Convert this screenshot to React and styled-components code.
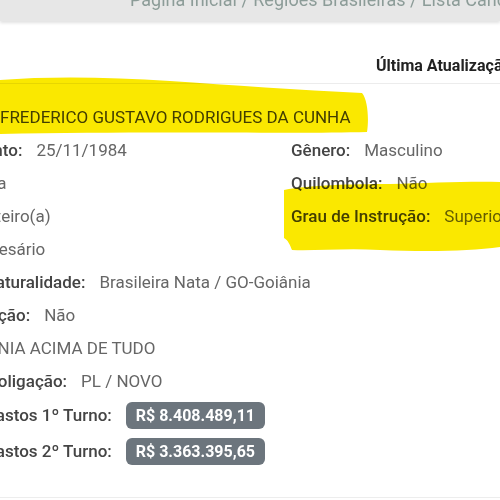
import React from 'react';
import styled, { createGlobalStyle } from 'styled-components';

const GlobalStyle = createGlobalStyle`
  body {
    margin: 0;
    background: #fff;
    font-family: Roboto, "Liberation Sans", sans-serif;
    overflow: hidden;
  }
`;

const Page = styled.div`
  position: relative;
  width: 500px;
  height: 500px;
  overflow: hidden;
  background: #fff;
`;

const TopBar = styled.div`
  height: 21px;
  background: #e7e7e7;
  box-shadow: 0 2px 3px rgba(0, 0, 0, 0.12);
  padding-left: 130px;
  overflow: hidden;
  position: relative;
  z-index: 1;
`;

const Crumb = styled.div`
  margin-top: -9px;
  font-size: 18px;
  line-height: 18px;
  color: #8c9c98;
  white-space: nowrap;
`;

const Sheet = styled.div`
  margin-left: -136px;
  width: 900px;
`;

const CardHeader = styled.div`
  padding: 35px 0 7px 512px;
  line-height: 20px;
  font-size: 16px;
  font-weight: 700;
  color: #222;
  white-space: nowrap;
  border-bottom: 1px solid #ececec;
`;

const CardBody = styled.div`
  padding: 16px 0 28px;
  border-bottom: 1px solid #ededed;
`;

const TwoCol = styled.div`
  display: grid;
  grid-template-columns: 427px 1fr;
`;

const Stack = styled.div`
  display: flex;
  flex-direction: column;
`;

const Row = styled.div`
  display: flex;
  align-items: center;
  gap: ${(p) => (p.$tight ? '8px' : '14px')};
  height: ${(p) => (p.$tall ? '36px' : '33px')};
  font-size: 17px;
  white-space: nowrap;
`;

const Label = styled.span`
  font-weight: 500;
  color: #444;
`;

const Value = styled.span`
  color: #666;
  ${(p) => p.$name && 'color: #444; text-transform: uppercase;'}
`;

const Badge = styled.span`
  display: inline-block;
  background: #6c757d;
  color: #fff;
  font-size: 16px;
  font-weight: 700;
  line-height: 19px;
  padding: 4px 10px;
  border-radius: 6px;
`;

const Marker = styled.svg`
  position: absolute;
  left: 0;
  top: 0;
  pointer-events: none;
  mix-blend-mode: multiply;
`;

const Field = ({ label, children, tall, tight }) => (
  <Row $tall={tall} $tight={tight}>
    <Label>{label}</Label>
    {children}
  </Row>
);

export default function App() {
  return (
    <Page>
      <GlobalStyle />
      <TopBar>
        <Crumb>Página Inicial / Regiões Brasileiras / Lista Candidatos</Crumb>
      </TopBar>
      <Sheet>
        <CardHeader>Última Atualização: 15/08/2024</CardHeader>
        <CardBody>
          <Field label="Nome Completo:" tight>
            <Value $name>Frederico Gustavo Rodrigues da Cunha</Value>
          </Field>
          <TwoCol>
            <Stack>
              <Field label="Data de Nascimento:"><Value>25/11/1984</Value></Field>
              <Field label="Cor/Raça:"><Value>Branca</Value></Field>
              <Field label="Estado Civil:"><Value>Solteiro(a)</Value></Field>
            </Stack>
            <Stack>
              <Field label="Gênero:"><Value>Masculino</Value></Field>
              <Field label="Quilombola:"><Value>Não</Value></Field>
              <Field label="Grau de Instrução:"><Value>Superior completo</Value></Field>
            </Stack>
          </TwoCol>
          <Field label="Ocupação:"><Value>Empresário</Value></Field>
          <Field label="Nacionalidade/ Naturalidade:">
            <Value>Brasileira Nata / GO-Goiânia</Value>
          </Field>
          <Field label="Concorre à Reeleição:"><Value>Não</Value></Field>
          <Field label="Coligação:"><Value>GOIÂNIA ACIMA DE TUDO</Value></Field>
          <Field label="Composição da Coligação:"><Value>PL / NOVO</Value></Field>
          <Field label="Limite Legal de Gastos 1º Turno:" tall>
            <Badge>R$ 8.408.489,11</Badge>
          </Field>
          <Field label="Limite Legal de Gastos 2º Turno:" tall>
            <Badge>R$ 3.363.395,65</Badge>
          </Field>
        </CardBody>
      </Sheet>
      <Marker width="500" height="500" viewBox="0 0 500 500">
        <path
          d="M0 80 C50 76 110 77 170 81 C230 85 300 90 362 93 C368 100 369 120 367 132 C300 134 150 131 0 134 Z"
          fill="#fae800"
        />
        <path
          d="M284 190 C310 185 350 184 390 184 C430 183 470 181 500 182 L500 247 C470 251 430 252 380 250 C345 248 315 251 292 250 C290 245 288 240 284 238 Z"
          fill="#fae800"
        />
      </Marker>
    </Page>
  );
}
